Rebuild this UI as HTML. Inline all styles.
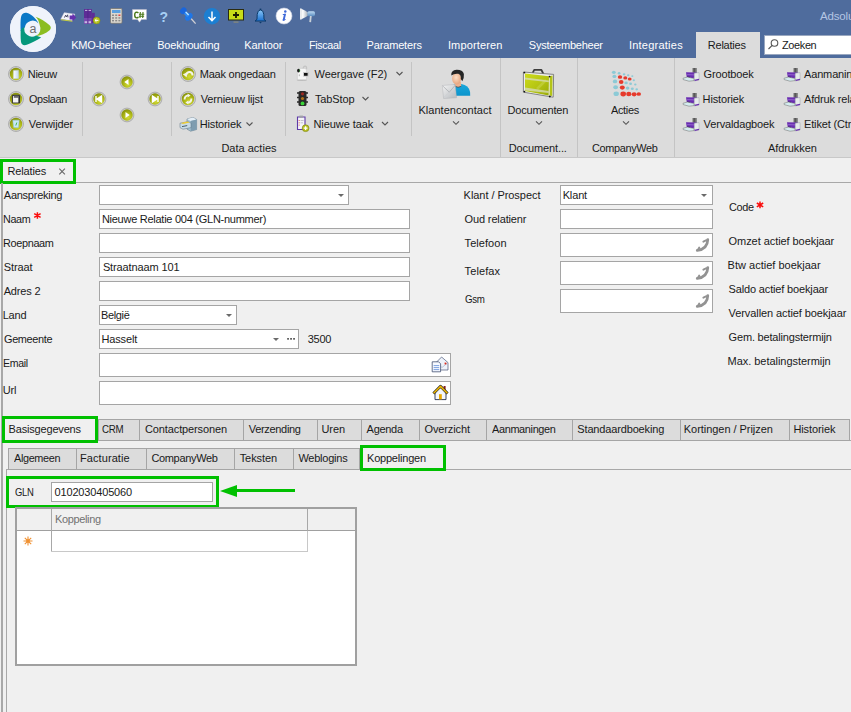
<!DOCTYPE html>
<html><head><meta charset="utf-8">
<style>
*{box-sizing:border-box;margin:0;padding:0}
html,body{width:851px;height:712px;overflow:hidden;background:#f0f0f0;position:relative;font-family:"Liberation Sans",sans-serif;font-size:11px;color:#1a1a1a}
.a{position:absolute}
.t{position:absolute;line-height:13px;margin-top:-1px;white-space:nowrap;letter-spacing:-0.15px}
.w{color:#fff}
.sep{position:absolute;width:1px;background:#c4c4c4}
.inp{position:absolute;background:#fff;border:1px solid #a5a5a5}
.tab{position:absolute;top:419px;height:22px;background:#dcdcdc;border:1px solid #a5a5a5;border-right:none}
.stab{position:absolute;top:448px;height:22px;background:#dcdcdc;border:1px solid #a5a5a5;border-right:none}
.green{position:absolute;border:3px solid #00c000}
.dd{position:absolute;width:0;height:0;border-left:3.5px solid transparent;border-right:3.5px solid transparent;border-top:3.5px solid #6a6a6a}
svg{position:absolute;overflow:visible}
</style></head><body>
<!-- TITLE BAR -->
<div class="a" style="left:0;top:0;width:851px;height:58px;background:#4f6c9d"></div>
<div class="a" style="left:10px;top:6px;width:46px;height:46px;border-radius:50%;background:#eef2fa"></div>
<div class="t" style="left:820px;top:11px;color:#b4c6e4;font-size:11.5px">Adsolu</div>

<!-- ribbon tabs -->
<div class="t w" style="left:71.20px;top:40px;letter-spacing:-0.278px">KMO-beheer</div>
<div class="t w" style="left:157.20px;top:40px;letter-spacing:-0.190px">Boekhouding</div>
<div class="t w" style="left:244.20px;top:40px;letter-spacing:-0.033px">Kantoor</div>
<div class="t w" style="left:308.82px;top:40px;letter-spacing:-0.350px;transform:scaleX(0.9781);transform-origin:0 0">Fiscaal</div>
<div class="t w" style="left:366.60px;top:40px;letter-spacing:-0.167px">Parameters</div>
<div class="t w" style="left:447.90px;top:40px;letter-spacing:0.156px">Importeren</div>
<div class="t w" style="left:528.80px;top:40px;letter-spacing:-0.242px">Systeembeheer</div>
<div class="t w" style="left:628.90px;top:40px;letter-spacing:0.240px">Integraties</div>
<div class="a" style="left:696px;top:32px;width:64px;height:26px;background:#dcdcdc"></div>
<div class="t" style="left:707.80px;top:40px;letter-spacing:-0.229px">Relaties</div>
<div class="a" style="left:764px;top:35px;width:87px;height:20px;background:#fff;border:1px solid #9aa8c0;border-right:none"></div>
<div class="t" style="left:782.20px;top:40px;letter-spacing:-0.350px;transform:scaleX(0.9927);transform-origin:0 0">Zoeken</div>

<!-- RIBBON -->
<div class="a" style="left:0;top:58px;width:851px;height:100px;background:#dcdcdc;border-bottom:1px solid #c8c8c8"></div>
<div class="sep" style="left:82px;top:62px;height:74px"></div>
<div class="sep" style="left:171px;top:62px;height:74px"></div>
<div class="sep" style="left:285px;top:62px;height:74px"></div>
<div class="sep" style="left:411px;top:62px;height:74px"></div>
<div class="sep" style="left:500px;top:58px;height:99px"></div>
<div class="sep" style="left:577px;top:58px;height:99px"></div>
<div class="sep" style="left:674px;top:58px;height:99px"></div>

<div class="t" style="left:27.80px;top:69px;letter-spacing:-0.300px">Nieuw</div>
<div class="t" style="left:28.80px;top:94px;letter-spacing:-0.350px;transform:scaleX(0.9820);transform-origin:0 0">Opslaan</div>
<div class="t" style="left:28.80px;top:119px;letter-spacing:-0.112px">Verwijder</div>
<div class="t" style="left:199.70px;top:69px;letter-spacing:-0.225px">Maak ongedaan</div>
<div class="t" style="left:200.70px;top:94px;letter-spacing:-0.146px">Vernieuw lijst</div>
<div class="t" style="left:199.70px;top:119px;letter-spacing:-0.137px">Historiek</div>
<div class="t" style="left:314.50px;top:69px;letter-spacing:-0.042px">Weergave (F2)</div>
<div class="t" style="left:314.90px;top:94px;letter-spacing:-0.100px">TabStop</div>
<div class="t" style="left:313.50px;top:119px;letter-spacing:-0.080px">Nieuwe taak</div>
<div class="t" style="left:418.50px;top:105px;letter-spacing:0.015px">Klantencontact</div>
<div class="t" style="left:507.60px;top:105px;letter-spacing:-0.178px">Documenten</div>
<div class="t" style="left:611.00px;top:105px;letter-spacing:-0.350px;transform:scaleX(0.9982);transform-origin:0 0">Acties</div>
<div class="t" style="left:221.40px;top:143px;letter-spacing:0.010px">Data acties</div>
<div class="t" style="left:508.70px;top:143px;letter-spacing:-0.110px">Document...</div>
<div class="t" style="left:591.70px;top:143px;letter-spacing:-0.350px;transform:scaleX(0.9918);transform-origin:0 0">CompanyWeb</div>
<div class="t" style="left:767.90px;top:143px;letter-spacing:-0.062px">Afdrukken</div>
<div class="t" style="left:703.60px;top:69px;letter-spacing:-0.150px">Grootboek</div>
<div class="t" style="left:702.60px;top:94px;letter-spacing:-0.138px">Historiek</div>
<div class="t" style="left:703.60px;top:119px;letter-spacing:-0.158px">Vervaldagboek</div>
<div class="t" style="left:804px;top:69px">Aanmaningen</div>
<div class="t" style="left:804px;top:94px">Afdruk relatie</div>
<div class="t" style="left:804px;top:119px">Etiket (Ctrl+E)</div>

<!-- DOC TAB STRIP -->
<div class="a" style="left:0;top:182px;width:851px;height:1px;background:#a8a8a8"></div>
<div class="a" style="left:3px;top:162px;width:70px;height:20px;background:#f0f0f0"></div>
<div class="green" style="left:0;top:159px;width:76px;height:25px"></div>
<div class="t" style="left:7.50px;top:166px;letter-spacing:-0.157px">Relaties</div>

<!-- MAIN PANEL -->
<div class="a" style="left:1px;top:183px;width:2px;height:529px;background:#a8a8a8"></div>

<div class="t" style="left:3.80px;top:190px;letter-spacing:-0.250px">Aanspreking</div>
<div class="t" style="left:2.82px;top:214px;letter-spacing:-0.350px;transform:scaleX(0.9796);transform-origin:0 0">Naam</div>
<div class="t" style="left:2.81px;top:238px;letter-spacing:-0.350px;transform:scaleX(0.9911);transform-origin:0 0">Roepnaam</div>
<div class="t" style="left:3.80px;top:262px;letter-spacing:-0.100px">Straat</div>
<div class="t" style="left:3.70px;top:286px;letter-spacing:-0.150px">Adres 2</div>
<div class="t" style="left:2.70px;top:310px;letter-spacing:-0.200px">Land</div>
<div class="t" style="left:3.70px;top:334px;letter-spacing:-0.350px;transform:scaleX(0.9928);transform-origin:0 0">Gemeente</div>
<div class="t" style="left:2.74px;top:358px;letter-spacing:-0.350px;transform:scaleX(0.9593);transform-origin:0 0">Email</div>
<div class="t" style="left:2.70px;top:385px;letter-spacing:-0.150px">Url</div>

<div class="inp" style="left:99px;top:185px;width:250px;height:20px"></div>
<div class="dd" style="left:338px;top:194px"></div>
<div class="inp" style="left:99px;top:209px;width:311px;height:20px"></div>
<div class="t" style="left:101.90px;top:214px;letter-spacing:-0.263px">Nieuwe Relatie 004 (GLN-nummer)</div>
<div class="inp" style="left:99px;top:233px;width:311px;height:20px"></div>
<div class="inp" style="left:99px;top:257px;width:311px;height:20px"></div>
<div class="t" style="left:102.90px;top:262px;letter-spacing:-0.115px">Straatnaam 101</div>
<div class="inp" style="left:99px;top:281px;width:311px;height:20px"></div>
<div class="inp" style="left:99px;top:305px;width:138px;height:20px"></div>
<div class="t" style="left:101.40px;top:310px;letter-spacing:-0.350px;transform:scaleX(0.9982);transform-origin:0 0">België</div>
<div class="dd" style="left:226px;top:314px"></div>
<div class="inp" style="left:99px;top:329px;width:200px;height:20px"></div>
<div class="t" style="left:101.40px;top:334px;letter-spacing:-0.133px">Hasselt</div>
<div class="dd" style="left:273px;top:338px"></div>
<div class="t" style="left:307.70px;top:334px;letter-spacing:-0.233px">3500</div>
<div class="inp" style="left:99px;top:353px;width:352px;height:24px"></div>
<div class="inp" style="left:99px;top:381px;width:352px;height:24px"></div>

<div class="t" style="left:463.60px;top:190px;letter-spacing:-0.053px">Klant / Prospect</div>
<div class="t" style="left:464.60px;top:214px;letter-spacing:-0.142px">Oud relatienr</div>
<div class="t" style="left:464.60px;top:238px;letter-spacing:0.057px">Telefoon</div>
<div class="t" style="left:464.60px;top:266px;letter-spacing:0.100px">Telefax</div>
<div class="t" style="left:464.60px;top:294px;letter-spacing:-0.350px;transform:scaleX(0.8834);transform-origin:0 0">Gsm</div>
<div class="inp" style="left:560px;top:185px;width:153px;height:20px"></div>
<div class="t" style="left:562.70px;top:190px;letter-spacing:-0.150px">Klant</div>
<div class="dd" style="left:701px;top:194px"></div>
<div class="inp" style="left:560px;top:209px;width:153px;height:20px"></div>
<div class="inp" style="left:560px;top:233px;width:153px;height:24px"></div>
<div class="inp" style="left:560px;top:261px;width:153px;height:24px"></div>
<div class="inp" style="left:560px;top:289px;width:153px;height:24px"></div>

<div class="t" style="left:728.60px;top:202px;letter-spacing:-0.350px;transform:scaleX(0.9900);transform-origin:0 0">Code</div>
<div class="t" style="left:728.60px;top:236px;letter-spacing:-0.065px">Omzet actief boekjaar</div>
<div class="t" style="left:727.60px;top:260px;letter-spacing:0.006px">Btw actief boekjaar</div>
<div class="t" style="left:728.60px;top:284px;letter-spacing:-0.155px">Saldo actief boekjaar</div>
<div class="t" style="left:728.60px;top:308px;letter-spacing:-0.088px">Vervallen actief boekjaar</div>
<div class="t" style="left:728.60px;top:332px;letter-spacing:-0.185px">Gem. betalingstermijn</div>
<div class="t" style="left:727.60px;top:356px;letter-spacing:-0.040px">Max. betalingstermijn</div>

<!-- MAIN TABS -->
<div class="a" style="left:3px;top:440px;width:848px;height:1px;background:#a8a8a8"></div>
<div class="tab" style="left:98px;width:41px"></div>
<div class="tab" style="left:139px;width:104px"></div>
<div class="tab" style="left:243px;width:74px"></div>
<div class="tab" style="left:317px;width:44px"></div>
<div class="tab" style="left:361px;width:58px"></div>
<div class="tab" style="left:419px;width:67px"></div>
<div class="tab" style="left:486px;width:86px"></div>
<div class="tab" style="left:572px;width:108px"></div>
<div class="tab" style="left:680px;width:109px"></div>
<div class="tab" style="left:789px;width:62px;border-right:1px solid #a5a5a5;width:61px"></div>
<div class="a" style="left:5px;top:419px;width:93px;height:22px;background:#f0f0f0"></div>
<div class="green" style="left:2px;top:416px;width:96px;height:27px"></div>
<div class="t" style="left:8.60px;top:424px;letter-spacing:-0.183px">Basisgegevens</div>
<div class="t" style="left:101.80px;top:424px;letter-spacing:-0.350px;transform:scaleX(0.8848);transform-origin:0 0">CRM</div>
<div class="t" style="left:145.00px;top:424px;letter-spacing:-0.121px">Contactpersonen</div>
<div class="t" style="left:248.80px;top:424px;letter-spacing:-0.322px">Verzending</div>
<div class="t" style="left:321.50px;top:424px;letter-spacing:-0.100px">Uren</div>
<div class="t" style="left:366.60px;top:424px;letter-spacing:-0.300px">Agenda</div>
<div class="t" style="left:424.50px;top:424px;letter-spacing:-0.125px">Overzicht</div>
<div class="t" style="left:492.00px;top:424px;letter-spacing:-0.350px;transform:scaleX(0.9922);transform-origin:0 0">Aanmaningen</div>
<div class="t" style="left:577.30px;top:424px;letter-spacing:-0.153px">Standaardboeking</div>
<div class="t" style="left:683.80px;top:424px;letter-spacing:-0.044px">Kortingen / Prijzen</div>
<div class="t" style="left:793.40px;top:424px;letter-spacing:-0.087px">Historiek</div>

<!-- SUB TABS -->
<div class="a" style="left:6px;top:469px;width:845px;height:1px;background:#a8a8a8"></div>
<div class="a" style="left:6px;top:469px;width:1px;height:243px;background:#a8a8a8"></div>
<div class="stab" style="left:8px;width:68px"></div>
<div class="stab" style="left:76px;width:70px"></div>
<div class="stab" style="left:146px;width:88px"></div>
<div class="stab" style="left:234px;width:59px"></div>
<div class="stab" style="left:293px;width:67px;border-right:1px solid #a5a5a5"></div>
<div class="a" style="left:363px;top:448px;width:81px;height:22px;background:#f0f0f0"></div>
<div class="green" style="left:360px;top:445px;width:86px;height:26px"></div>
<div class="t" style="left:14.00px;top:453px;letter-spacing:-0.350px;transform:scaleX(0.9882);transform-origin:0 0">Algemeen</div>
<div class="t" style="left:80.00px;top:453px;letter-spacing:0.078px">Facturatie</div>
<div class="t" style="left:151.40px;top:453px;letter-spacing:-0.333px">CompanyWeb</div>
<div class="t" style="left:239.70px;top:453px;letter-spacing:-0.083px">Teksten</div>
<div class="t" style="left:298.40px;top:453px;letter-spacing:-0.237px">Weblogins</div>
<div class="t" style="left:367.00px;top:453px;letter-spacing:-0.210px">Koppelingen</div>

<!-- GLN -->
<div class="green" style="left:6px;top:476px;width:213px;height:32px"></div>
<div class="t" style="left:14.80px;top:487px;letter-spacing:-0.350px;transform:scaleX(0.8592);transform-origin:0 0">GLN</div>
<div class="inp" style="left:51px;top:482px;width:162px;height:20px"></div>
<div class="t" style="left:54.50px;top:487px;letter-spacing:-0.158px">0102030405060</div>
<div class="a" style="left:234px;top:489px;width:61px;height:3px;background:#00c000"></div>
<svg style="left:0;top:0" width="851" height="712"><polygon points="220,491 237,485 237,497" fill="#00c000"/></svg>

<!-- GRID -->
<div class="a" style="left:15px;top:507px;width:342px;height:159px;background:#fff;border:2px solid #a0a0a0"></div>
<div class="a" style="left:17px;top:509px;width:338px;height:22px;background:#f0f0f0;border-bottom:1px solid #a0a0a0"></div>
<div class="a" style="left:51px;top:509px;width:1px;height:43px;background:#a8a8a8"></div>
<div class="a" style="left:307px;top:509px;width:1px;height:22px;background:#a8a8a8"></div>
<div class="a" style="left:51px;top:551px;width:257px;height:1px;background:#c8c8c8"></div>
<div class="a" style="left:307px;top:531px;width:1px;height:21px;background:#c8c8c8"></div>
<div class="t" style="left:54.70px;top:514px;color:#707070;letter-spacing:-0.350px;transform:scaleX(0.9978);transform-origin:0 0">Koppeling</div>
<!--ICONS--><svg style="left:0;top:0" width="851" height="712" viewBox="0 0 851 712">
<defs>
<radialGradient id="yg" cx="0.6" cy="0.72" r="0.8"><stop offset="0" stop-color="#d2da36"/><stop offset="0.5" stop-color="#acb616"/><stop offset="1" stop-color="#7e880a"/></radialGradient>
<linearGradient id="brief" x1="0" y1="0" x2="1" y2="1"><stop offset="0" stop-color="#cedc1c"/><stop offset="0.55" stop-color="#b4c412"/><stop offset="1" stop-color="#9aaa0a"/></linearGradient>
<linearGradient id="prn" x1="0" y1="0" x2="0" y2="1"><stop offset="0" stop-color="#7a4fc8"/><stop offset="1" stop-color="#4a2590"/></linearGradient>
<radialGradient id="face" cx="0.45" cy="0.4" r="0.6"><stop offset="0" stop-color="#fde0c8"/><stop offset="1" stop-color="#e7a57e"/></radialGradient>
</defs>
<!-- LOGO -->
<circle cx="33" cy="29" r="23" fill="#eff3fb"/>
<path d="M20.7 31.3 C20.4 25 20.4 19 21.3 16 C22.3 13 25 12.4 27.2 13 C31.5 14.2 35.8 18.3 38.6 23.4 A7.8 7.8 0 0 0 24.9 27.2 C23.2 28.6 21.8 30 20.7 31.3Z" fill="#0a78c6"/>
<path d="M35.6 16.8 C40 18.4 46 21.8 49.6 25.3 C51.2 27 51.2 28.6 49.6 30.2 C46 33.4 40.5 35.6 35.6 36.2 L36.5 35.5 A7.8 7.8 0 0 0 39.8 25.5 C39 21.5 37.8 18.8 35.6 16.8Z" fill="#8bbd22"/>
<path d="M24.5 27 A7.8 7.8 0 0 0 36 35.6 L41.2 37.6 C36.5 40.5 30.5 43.5 26.8 44.8 C23.6 45.8 21.3 44.6 21 41.8 C20.5 38 20.6 33 20.7 30.3 C21.5 28.8 23 27.6 24.5 27Z" fill="#06987c"/>
<text x="29.6" y="32.6" font-family="Liberation Sans" font-size="12.5" fill="#6e6e6e">a</text>
<!-- TITLE ICONS -->
<g>
<polygon points="60.6,19.2 64.2,12.6 75,14 72.4,20.8" fill="#f6f6fc" stroke="#a8a8c0" stroke-width="0.4"/>
<path d="M61 19.8 L72.4 21.2" stroke="#c4cc40" stroke-width="1.1"/>
<path d="M64.4 17.6 L65.6 15.2 L66.4 17 L67.6 14.8 L68 17.4" stroke="#303050" stroke-width="0.8" fill="none"/>
<polygon points="69.6,15.6 72.4,15.6 72.6,13.6 76.2,17.4 72.6,21.2 72.4,19.4 69.6,19.4" fill="#6630ae"/>
</g>
<g>
<rect x="84" y="9" width="7.8" height="14.8" fill="#5e2c96"/>
<rect x="84" y="18" width="7.8" height="5.8" fill="#7a4ab0"/>
<path d="M85 10.4 H87.5 M88.5 10.4 H91" stroke="#e8e0f4" stroke-width="0.8"/>
<rect x="84.6" y="21.2" width="2.6" height="2" fill="#c8b8e0"/><rect x="88.4" y="21.2" width="2.6" height="2" fill="#c8b8e0"/>
<path d="M87.9 9 V23.8" stroke="#4a1e80" stroke-width="0.5"/>
<rect x="91.8" y="12.8" width="3" height="10.2" fill="#5e2c96"/>
<circle cx="96.6" cy="20.4" r="3.5" fill="#b8c420" stroke="#7a8410" stroke-width="0.5"/>
<path d="M98.4 20.4 L95.2 20.4 M96.5 19 L95 20.4 L96.5 21.8" stroke="#fff" stroke-width="1" fill="none"/>
</g>
<g>
<rect x="110.5" y="8.5" width="11.5" height="14.8" rx="1" fill="#dcd8d0" stroke="#7a7670" stroke-width="0.8"/>
<rect x="112" y="10" width="8.5" height="3" fill="#5aa0e0"/>
<g fill="#8a8a8a"><rect x="112" y="14.5" width="2" height="1.5"/><rect x="115.2" y="14.5" width="2" height="1.5"/><rect x="118.4" y="14.5" width="2" height="1.5" fill="#e04040"/>
<rect x="112" y="17.2" width="2" height="1.5"/><rect x="115.2" y="17.2" width="2" height="1.5"/><rect x="118.4" y="17.2" width="2" height="1.5"/>
<rect x="112" y="19.9" width="2" height="1.5"/><rect x="115.2" y="19.9" width="2" height="1.5"/><rect x="118.4" y="19.9" width="2" height="1.5"/></g>
</g>
<g>
<path d="M132.5 9.5 H146.5 V19.5 H141.5 L139.5 22.2 L137.5 19.5 H132.5Z" fill="#fff" stroke="#b8b8c8" stroke-width="0.5"/>
<path d="M138.4 13 Q137.6 12.1 136.6 12.1 Q134.7 12.3 134.7 15 Q134.7 17.8 136.6 17.9 Q137.7 17.9 138.4 17" stroke="#4a7818" stroke-width="1.4" fill="none"/><path d="M140.3 12 L140 18 M143 12 L142.7 18 M139 14.2 H144.3 M138.8 16.2 H144.1" stroke="#4a7818" stroke-width="1.1"/>
</g>
<text x="159.6" y="21.6" font-family="Liberation Sans" font-size="14" font-weight="bold" fill="#a6cff4">?</text>
<g>
<path d="M191 18.5 L195.6 23.6" stroke="#d0d0d4" stroke-width="1.3"/>
<ellipse cx="188.8" cy="16.8" rx="4.4" ry="3" transform="rotate(-45 188.8 16.8)" fill="#1f76e6"/>
<path d="M184 11.5 L188.5 16" stroke="#2f8af2" stroke-width="3.6"/>
<ellipse cx="183.3" cy="10.8" rx="3.6" ry="2.9" transform="rotate(-45 183.3 10.8)" fill="#1a66dc"/>
<path d="M185.6 11.8 L188.6 15" stroke="#c8ecff" stroke-width="1.1"/>
</g>
<circle cx="212" cy="16.2" r="8.2" fill="#1c7fd2"/>
<path d="M212 11.5 V20.5 M208.5 17 L212 20.6 L215.5 17" stroke="#fff" stroke-width="1.5" fill="none"/>
<g>
<rect x="228.5" y="9.5" width="15" height="10.5" fill="#c8dc18" stroke="#2b2b10" stroke-width="1"/>
<path d="M236 12 V18 M233 15 H239" stroke="#1b1b00" stroke-width="1.8"/>
<rect x="233.5" y="21.5" width="5" height="1.2" fill="#8a8a7a"/>
</g>
<g>
<defs><linearGradient id="bellg" x1="0" y1="0" x2="0" y2="1"><stop offset="0" stop-color="#8cc8f8"/><stop offset="1" stop-color="#1a70d0"/></linearGradient>
<linearGradient id="hornx" x1="0" y1="0" x2="1" y2="0"><stop offset="0" stop-color="#c8ccd0"/><stop offset="0.3" stop-color="#ffffff"/><stop offset="1" stop-color="#a8b0b8"/></linearGradient>
<linearGradient id="cyl" x1="0" y1="0" x2="0" y2="1"><stop offset="0" stop-color="#c0dcf4"/><stop offset="1" stop-color="#5a8cc0"/></linearGradient></defs>
<path d="M260.5 9.8 Q263.6 10.4 263.8 14.5 L264 19 Q264.6 20.6 266 21 H255 Q256.4 20.6 257 19 L257.2 14.5 Q257.4 10.4 260.5 9.8Z" fill="url(#bellg)" stroke="#0c3a6a" stroke-width="1"/>
<rect x="259.7" y="8.6" width="1.6" height="1.6" fill="#0c3a6a"/>
<path d="M259.2 22 H261.8 L260.5 23.4Z" fill="#0c3a6a"/>
</g>
<g>
<circle cx="284" cy="16" r="8" fill="#fff" stroke="#c8cfe0" stroke-width="0.6"/>
<circle cx="285.3" cy="11.5" r="1.25" fill="#3d68d8"/>
<path d="M285 14.4 L283.7 19.8" stroke="#3d68d8" stroke-width="1.9" stroke-linecap="round"/>
<path d="M282.8 14.5 H285.2 M282.6 20.1 Q284 20.4 285.6 19.4" stroke="#3d68d8" stroke-width="1" fill="none"/>
</g>
<g>
<path d="M300.6 8.6 Q302.6 9 307.8 12.4 V15.8 Q302.6 19 300.6 19.6Z" fill="url(#hornx)"/>
<path d="M300.8 8.6 V19.6" stroke="#f4f4f4" stroke-width="1.4"/>
<rect x="307.4" y="11.2" width="7.6" height="5" rx="1.6" fill="url(#cyl)"/>
<path d="M310.8 16 L310.2 22.2" stroke="#c8d0d8" stroke-width="1.8"/>
</g>
<!-- RIBBON ROUND ICONS -->
<g id="rb">
<circle cx="16" cy="74" r="7.5" fill="#cdcdcd" stroke="#a4a4a4" stroke-width="0.8"/><circle cx="16" cy="74" r="6.2" fill="url(#yg)"/>
<defs><linearGradient id="docg" x1="0" y1="0" x2="1" y2="0"><stop offset="0" stop-color="#ffffff"/><stop offset="1" stop-color="#c4d8ee"/></linearGradient></defs><path d="M13.4 70.6 L18.6 70.2 V78.4 L13.4 78.8Z" fill="url(#docg)" stroke="#b8c8dc" stroke-width="0.4"/>
<circle cx="16" cy="99" r="7.5" fill="#cdcdcd" stroke="#a4a4a4" stroke-width="0.8"/><circle cx="16" cy="99" r="6.2" fill="url(#yg)"/>
<rect x="12.4" y="95.4" width="7.2" height="7.6" rx="0.8" fill="#f4f4f4" stroke="#3a3a3a" stroke-width="1.1"/>
<rect x="13.8" y="95.6" width="4.4" height="2.2" fill="#6a6a6a"/><path d="M19 96 V103" stroke="#222" stroke-width="1.2"/>
<circle cx="16" cy="124" r="7.5" fill="#cdcdcd" stroke="#a4a4a4" stroke-width="0.8"/><circle cx="16" cy="124" r="6.2" fill="url(#yg)"/>
<path d="M12.8 120.2 H19.2 L18.3 127.6 H13.7Z" fill="#c8e8f8" stroke="#8cc0e0" stroke-width="0.5"/>
<path d="M16.8 122.5 L15.8 125.5" stroke="#3cae3c" stroke-width="0.9"/>
<!-- nav -->
<circle cx="127" cy="82" r="6.9" fill="#cdcdcd" stroke="#a4a4a4" stroke-width="0.8"/><circle cx="127" cy="82" r="5.7" fill="url(#yg)"/>
<polygon points="124.3,82 128.5,79 128.5,85" fill="#fff"/>
<circle cx="127" cy="115" r="6.9" fill="#cdcdcd" stroke="#a4a4a4" stroke-width="0.8"/><circle cx="127" cy="115" r="5.7" fill="url(#yg)"/>
<polygon points="129.7,115 125.5,112 125.5,118" fill="#fff"/>
<circle cx="99" cy="99" r="6.9" fill="#cdcdcd" stroke="#a4a4a4" stroke-width="0.8"/><circle cx="99" cy="99" r="5.7" fill="url(#yg)"/>
<path d="M96 96 V102 M97 99 L101.5 96 V102Z" stroke="#fff" stroke-width="1.4" fill="#fff"/>
<circle cx="155" cy="99" r="6.9" fill="#cdcdcd" stroke="#a4a4a4" stroke-width="0.8"/><circle cx="155" cy="99" r="5.7" fill="url(#yg)"/>
<path d="M158 96 V102 M157 99 L152.5 96 V102Z" stroke="#fff" stroke-width="1.4" fill="#fff"/>
<!-- undo / refresh -->
<circle cx="188" cy="74" r="7.5" fill="#cdcdcd" stroke="#a4a4a4" stroke-width="0.8"/><circle cx="188" cy="74" r="6.2" fill="url(#yg)"/>
<path d="M186 74.8 Q187 71.8 190 72 Q192.6 72.4 192.6 75.6" stroke="#f4f4e8" stroke-width="2.1" fill="none"/>
<polygon points="182.8,74.2 187.4,72.6 186.6,77.2" fill="#f4f4e8"/>
<circle cx="188" cy="99" r="7.5" fill="#cdcdcd" stroke="#a4a4a4" stroke-width="0.8"/><circle cx="188" cy="99" r="6.2" fill="url(#yg)"/>
<path d="M184.6 99.6 Q184.6 95.6 188.4 95.4 M191.4 98.4 Q191.4 102.4 187.6 102.6" stroke="#f4f4e8" stroke-width="1.9" fill="none"/>
<polygon points="187.6,93.4 190.6,95.6 187.6,97.6" fill="#f4f4e8"/><polygon points="188.4,100.4 185.4,102.4 188.4,104.6" fill="#f4f4e8"/>
</g>
<!-- historiek cabinet -->
<g>
<polygon points="187,119 193,117.4 196.6,119.4 196.6,129.6 190.6,131.2 187,129.2" fill="#a8c4d4" stroke="#5a7080" stroke-width="0.5"/>
<polygon points="187,119 193,117.4 196.6,119.4 190.6,121" fill="#e4eef6"/>
<polygon points="190.6,121 196.6,119.4 196.6,129.6 190.6,131.2" fill="#7e9cb0"/>
<polygon points="180,123.2 188,121.6 191,123 191,127.6 183,129.2 180,127.6" fill="#c8dce8" stroke="#5a7080" stroke-width="0.5"/>
<polygon points="180.8,123 187.6,121.6 189.8,122.6 183,124" fill="#f0cc30"/>
<path d="M182 126.6 L187.2 125.6" stroke="#3a5060" stroke-width="0.9"/>
</g>
<!-- weergave -->
<g>
<ellipse cx="301.8" cy="80" rx="5" ry="0.9" fill="#bcbcbc"/>
<path d="M303.2 68.8 Q303.4 66 305.4 66.2 Q306.9 66.6 306.5 69.2" stroke="#c4c4c4" stroke-width="1.3" fill="none"/>
<path d="M297.4 70.2 Q297.8 68.6 300 68.4 H305 Q306.4 68.6 306.4 70.2 V79.7 H297.4Z" fill="#f6f6f6" stroke="#c4c4c4" stroke-width="0.5"/>
<ellipse cx="298.5" cy="70.6" rx="1.4" ry="1.9" fill="#1a1a1a"/>
<path d="M299.6 69.4 Q300 70.6 299.5 72" stroke="#2a9a2a" stroke-width="0.6" fill="none"/>
<rect x="303.3" y="72.3" width="4.9" height="4" fill="#fff" stroke="#b0b0b0" stroke-width="0.4"/>
<rect x="303.9" y="72.9" width="3.8" height="2.9" fill="#111"/>
<path d="M299.3 74.4 V76.2" stroke="#a0a0a0" stroke-width="0.8"/>
</g>
<!-- traffic light -->
<g>
<rect x="298.5" y="91" width="8" height="15" rx="1.6" fill="#2a2a2a"/>
<path d="M297 93 H308 M297 97.5 H308 M297 102 H308" stroke="#2a2a2a" stroke-width="1.3"/>
<circle cx="302.5" cy="93.8" r="1.6" fill="#9a2a22"/>
<circle cx="302.5" cy="98.5" r="1.6" fill="#b07018"/>
<circle cx="302.5" cy="103.4" r="1.9" fill="#3ad43a"/>
</g>
<!-- nieuwe taak -->
<g>
<path d="M297.5 117 H305 V129.5 H297.5Z" fill="#f4f4f8" stroke="#5e3aa8" stroke-width="1.1"/>
<rect x="299.4" y="115.6" width="3.6" height="2.2" fill="#a0a0a8"/>
<path d="M298.6 120.5 H299.8 M298.6 122.8 H299.8 M298.6 125.1 H299.8" stroke="#e04040" stroke-width="0.7"/><path d="M300.6 120.5 H303.6 M300.6 122.8 H303" stroke="#a0a0b0" stroke-width="0.6"/>
<circle cx="305.6" cy="128.2" r="3.4" fill="#b8c020" stroke="#7a8010" stroke-width="0.6"/>
<path d="M305.6 126.3 V130.1 M303.7 128.2 H307.5" stroke="#fff" stroke-width="1.3"/>
</g>
<!-- chevrons -->
<g stroke="#555" stroke-width="1.1" fill="none">
<path d="M246.5 122.5 L249.5 125.5 L252.5 122.5"/>
<path d="M396.5 72 L399.5 75 L402.5 72"/>
<path d="M362.5 97 L365.5 100 L368.5 97"/>
<path d="M382 122 L385 125 L388 122"/>
<path d="M453 121.3 L456 124.3 L459 121.3"/>
<path d="M536 121.3 L539 124.3 L542 121.3"/>
<path d="M623 121.3 L626 124.3 L629 121.3"/>
</g>
<!-- person w/ mail -->
<defs><linearGradient id="env" x1="0" y1="0" x2="1" y2="1"><stop offset="0" stop-color="#f4f4f4"/><stop offset="1" stop-color="#b4b8bc"/></linearGradient>
<linearGradient id="shirt" x1="0" y1="0" x2="0" y2="1"><stop offset="0" stop-color="#1aa8dc"/><stop offset="1" stop-color="#0c94cc"/></linearGradient></defs>
<g>
<path d="M450.5 95.8 L450.5 88.5 Q452.5 84.2 457.5 83.6 Q466 84 469 88.8 Q470.8 92.5 470.2 95.8Z" fill="url(#shirt)"/>
<path d="M455 82 L461 82 L461.3 86.3 Q458 88.2 454.8 86.2Z" fill="#eeb08e"/>
<path d="M455 86.2 Q458 88.3 461.3 86.3" stroke="#244050" stroke-width="0.7" fill="none"/>
<ellipse cx="456.6" cy="78.6" rx="4.5" ry="5.8" fill="url(#face)"/>
<path d="M451.3 75.5 Q450.8 70.2 456.5 69.8 Q462.6 69.6 463.9 74 Q464.3 78 462.3 81.2 L460.8 79 Q461.2 74.6 458.3 73.8 Q454 73.4 451.3 75.5Z" fill="#262626"/>
<path d="M442.3 85.5 L455.2 84.4 L456.6 97.8 L443.6 98.5Z" fill="url(#env)" stroke="#a8acb0" stroke-width="0.4"/>
<path d="M442.8 86 L449.3 92.2 L455.4 85" stroke="#9ca0a4" stroke-width="0.6" fill="none"/>
<path d="M443.4 98 L449 92.5 M456.2 97.4 L450.5 92" stroke="#c4c8cc" stroke-width="0.5" fill="none"/>
</g>
<!-- briefcase -->
<g>
<path d="M532.6 73.2 L534.2 69.8 H541.4 L543.4 74" stroke="#3c3c3c" stroke-width="1.8" fill="none" stroke-linejoin="round"/>
<polygon points="523.4,72 553.6,74.4 553.2,97.2 523.4,92.2" fill="#ececec" stroke="#6a6a6a" stroke-width="0.8"/>
<polygon points="525,73.4 549,76.3 548.6,95.5 525,91" fill="url(#brief)"/>
<polygon points="549.8,76.2 552.6,75.4 552.2,96 549.6,95.6" fill="#b4c418"/>
<polygon points="525,77.4 548.8,80.4 548.8,82.2 525,79.4" fill="#d8dcc0" opacity="0.75"/>
<polygon points="525,87.6 548.7,90.9 548.7,93.1 525,90.4" fill="#d8dcc0" opacity="0.75"/>
<path d="M537 89 L546 80" stroke="#d8e070" stroke-width="2.5" opacity="0.35"/>
<circle cx="524.4" cy="72.6" r="0.9" fill="#111"/><circle cx="549.6" cy="76.6" r="0.9" fill="#111"/>
<circle cx="524.4" cy="91.6" r="0.9" fill="#111"/><circle cx="549.8" cy="96.5" r="0.9" fill="#111"/>
</g>
<!-- acties dots -->
<ellipse cx="613.8" cy="72.3" rx="1.9" ry="1.61" fill="#8ccad6"/><ellipse cx="619.1" cy="73.2" rx="1.4" ry="1.19" fill="#8ccad6"/><ellipse cx="624.1" cy="74.3" rx="1.3" ry="1.10" fill="#8ccad6"/><ellipse cx="628.2" cy="75.2" rx="1.2" ry="1.02" fill="#8ccad6"/><ellipse cx="632.3" cy="76.1" rx="1.1" ry="0.94" fill="#8ccad6"/>
<ellipse cx="614.4" cy="76.4" rx="2.0" ry="1.70" fill="#8ccad6"/><ellipse cx="620" cy="77" rx="2.2" ry="1.87" fill="#e63a2c"/><ellipse cx="625.3" cy="77.9" rx="2.0" ry="1.70" fill="#e63a2c"/><ellipse cx="629.7" cy="79" rx="1.9" ry="1.61" fill="#e63a2c"/><ellipse cx="633.8" cy="80.2" rx="1.1" ry="0.94" fill="#8ccad6"/>
<ellipse cx="615" cy="81.4" rx="2.2" ry="1.87" fill="#8ccad6"/><ellipse cx="621.2" cy="82" rx="2.3" ry="1.95" fill="#e63a2c"/><ellipse cx="626.1" cy="82.9" rx="1.7" ry="1.44" fill="#8ccad6"/><ellipse cx="630.6" cy="83.7" rx="1.4" ry="1.19" fill="#8ccad6"/><ellipse cx="635.3" cy="84.6" rx="1.2" ry="1.02" fill="#8ccad6"/>
<ellipse cx="615.6" cy="87.3" rx="2.4" ry="2.04" fill="#8ccad6"/><ellipse cx="622.3" cy="87.6" rx="2.5" ry="2.12" fill="#e63a2c"/><ellipse cx="627.6" cy="88.1" rx="1.8" ry="1.53" fill="#8ccad6"/><ellipse cx="632.3" cy="88.7" rx="1.5" ry="1.27" fill="#8ccad6"/><ellipse cx="636.7" cy="89.3" rx="1.3" ry="1.10" fill="#8ccad6"/>
<ellipse cx="616.2" cy="93.7" rx="2.7" ry="2.29" fill="#8ccad6"/><ellipse cx="623.2" cy="94" rx="2.8" ry="2.38" fill="#e63a2c"/><ellipse cx="628.8" cy="94" rx="2.6" ry="2.21" fill="#e63a2c"/><ellipse cx="634.1" cy="94.3" rx="2.5" ry="2.12" fill="#e63a2c"/><ellipse cx="638.8" cy="94" rx="2.2" ry="1.87" fill="#e63a2c"/>
<!-- printers -->
<g id="pr">
<defs><linearGradient id="pap" x1="0" y1="0" x2="1" y2="0"><stop offset="0" stop-color="#c8c8c8"/><stop offset="0.4" stop-color="#4a4a4a"/><stop offset="1" stop-color="#9a9a9a"/></linearGradient></defs>
<rect x="692" y="68" width="5" height="4.8" fill="url(#pap)"/>
<polygon points="686,72.2 697,72.4 698.2,77.6 687,78.6" fill="#6a2eb2"/>
<path d="M687.2 74.6 L696.4 75" stroke="#9a72d2" stroke-width="0.8"/>
<path d="M687 77.2 L690 77.4" stroke="#1a1030" stroke-width="1"/>
<polygon points="694.2,73.2 699,72.6 699.2,79.8 694.2,81" fill="#e6eaec" stroke="#8a9098" stroke-width="0.4"/>
<path d="M694.6 80.4 L699 79.4" stroke="#6a2eb2" stroke-width="1.3"/>
<polygon points="683,78.3 687.5,77 694,78.6 694,80.6 689,81.2 683.2,79.6" fill="#d4ecee" stroke="#6a6a6a" stroke-width="0.5"/>
</g>
<use href="#pr" x="0" y="25"/><use href="#pr" x="0" y="50"/>
<use href="#pr" x="101" y="0"/><use href="#pr" x="101" y="25"/><use href="#pr" x="101" y="50"/>

<!-- search icon -->
<g stroke="#555" stroke-width="1.1" fill="none"><circle cx="774.5" cy="43" r="3.3"/><path d="M772.2 45.3 L768.5 49"/></g>

<!-- phone icons -->
<g id="ph" stroke="#939393" fill="none" stroke-linecap="round">
<path d="M707.8 239.6 Q707.5 249 697.2 250.4" stroke-width="2.7"/>
<path d="M706.5 240.2 L703.4 241.6 M698 250 L699.2 247.6" stroke-width="2"/>
</g>
<use href="#ph" y="28"/><use href="#ph" y="56"/>
<!-- email icon -->
<g>
<path d="M436 362.6 L441.6 357 L448 362.6 V370 H436Z" fill="#eef2fa" stroke="#4a5878" stroke-width="0.7" stroke-linejoin="round"/>
<path d="M436.3 362.8 L442 367.5 L447.7 362.8" stroke="#98a4c0" stroke-width="0.6" fill="none"/>
<rect x="444.6" y="362.6" width="1.8" height="1.8" fill="#e02818"/>
<path d="M432.2 361.8 H438.6 L440.6 363.8 V371.8 H432.2Z" fill="#f6f9ff" stroke="#37466a" stroke-width="0.75" stroke-linejoin="round"/>
<path d="M433.6 365.6 H439.2 M433.6 367.6 H439.2 M433.6 369.6 H439.2" stroke="#5c8ad8" stroke-width="0.8"/>
</g>
<!-- house -->
<g>
<rect x="443.6" y="386" width="2" height="5.2" fill="#8a1e1e"/>
<path d="M435 392.2 V399.6 H446 V392.2 L440.5 387.6Z" fill="#f4f6fc" stroke="#24304c" stroke-width="0.9"/>
<path d="M433.4 393.4 L440.5 386.3 L447.6 393.4" stroke="#2a2a2a" stroke-width="2.8" fill="none" stroke-linejoin="round"/>
<path d="M433.6 393.2 L440.5 386.4 L447.4 393.2" stroke="#f0b800" stroke-width="1.5" fill="none" stroke-linejoin="round"/>
<rect x="439" y="394.2" width="2.8" height="5.2" fill="#e8a800"/>
</g>
<rect x="287.2" y="338" width="1.7" height="1.7" fill="#505050"/><rect x="290.2" y="338" width="1.7" height="1.7" fill="#505050"/><rect x="293.2" y="338" width="1.7" height="1.7" fill="#505050"/>
<path d="M59.3 168.7 L64.9 174.3 M64.9 168.7 L59.3 174.3" stroke="#666" stroke-width="1.05"/>
<!-- stars -->
<path d="M37.4 212.2 V218.8 M34.2 213.6 L40.6 217.4 M40.6 213.6 L34.2 217.4" stroke="#fa0c0c" stroke-width="1.5"/>
<path d="M760 201.6 V208.2 M756.8 203 L763.2 206.8 M763.2 203 L756.8 206.8" stroke="#fa0c0c" stroke-width="1.5"/>
<g stroke="#f09030" stroke-width="1.1"><path d="M28 536.5 V545.5 M23.5 541 H32.5 M24.8 537.8 L31.2 544.2 M31.2 537.8 L24.8 544.2"/></g>
<circle cx="28" cy="541" r="1.8" fill="#f09030"/>
</svg>
<!--/ICONS-->
</body></html>
